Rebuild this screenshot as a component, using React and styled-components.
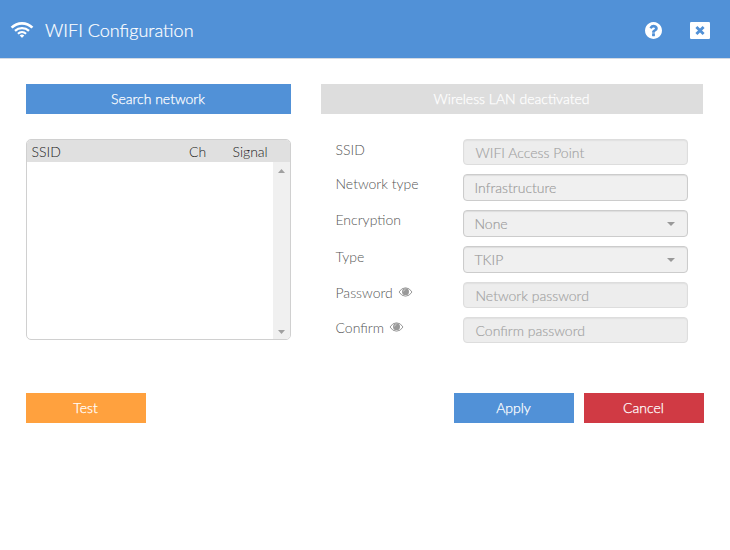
import React from "react";
import styled, { createGlobalStyle } from "styled-components";

const Global = createGlobalStyle`
  *, *::before, *::after { box-sizing: border-box; }
  body { margin: 0; background: #fff; font-family: Lato, "Liberation Sans", sans-serif; font-weight: 300; font-size: 14px; color: #555; }
  button, input { font: inherit; }
`;

const Page = styled.div`
  width: 730px;
  height: 550px;
  overflow: hidden;
  background: #fff;
`;

const Header = styled.header`
  display: flex;
  align-items: center;
  height: 59px;
  padding: 2px 20px 0 10px;
  background: #5191d7;
  border-bottom: 1px solid #d3dae4;
  color: #fff;
`;

const Title = styled.h1`
  flex: 1;
  margin: 0 0 0 11px;
  font-size: 18px;
  line-height: 24px;
  font-weight: 300;
  -webkit-text-stroke: 0.2px currentColor;
`;

const IconButton = styled.button`
  display: flex;
  padding: 0;
  border: 0;
  background: none;
  color: #fff;
  margin-left: ${(p) => p.$gap || 0}px;
`;

const Icon = styled.svg`
  display: block;
  fill: currentColor;
  flex: none;
`;

const Main = styled.main`
  display: grid;
  grid-template-columns: 265px 382px;
  column-gap: 30px;
  padding: 25px 26px 0;
`;

const tones = { blue: "#5191d7", orange: "#ffa13e", red: "#d03a44", grey: "#ddd" };

const Button = styled.button`
  display: block;
  width: ${(p) => p.$width || "100%"};
  height: 30px;
  padding: 0 1px 0 0;
  border: 0;
  background: ${(p) => tones[p.$tone]};
  color: #fff;
  font-size: 14px;
  font-weight: 300;
  -webkit-text-stroke: 0.25px currentColor;
  line-height: 30px;
  text-align: center;
`;

const NetworkList = styled.section`
  height: 201px;
  margin-top: 25px;
  border: 1px solid #d0d0d0;
  border-radius: 5px;
  overflow: hidden;
`;

const ListHead = styled.div`
  display: grid;
  grid-template-columns: 157.5px 43.5px 1fr;
  height: 22px;
  padding: 0 4.5px;
  background: #e0e0e0;
  color: #222;
  line-height: 23px;
`;

const ListBody = styled.div`
  display: flex;
  justify-content: flex-end;
  height: 177px;
`;

const Scrollbar = styled.div`
  display: flex;
  flex-direction: column;
  align-items: center;
  justify-content: space-between;
  width: 17px;
  padding: 7px 0 5px;
  background: #f0f0f0;
  color: #a0a0a0;
`;

const Form = styled.form`
  margin-top: 25px;
  padding: 0 15px;
`;

const Row = styled.div`
  display: grid;
  grid-template-columns: 127px 225px;
  height: ${(p) => p.$height}px;
`;

const Label = styled.label`
  display: flex;
  align-items: center;
  gap: 5px;
  height: ${(p) => (p.$raised ? 19 : 20)}px;
  margin-left: -0.5px;
  color: #555;
`;

const Field = styled.div`
  display: flex;
  align-items: center;
  justify-content: space-between;
  height: ${(p) => (p.$select ? 27 : 26)}px;
  padding: 1px 12px 0 ${(p) => (p.$select ? 10.5 : 11.5)}px;
  border: 1px solid ${(p) => (p.$select ? "#ccc" : "#ddd")};
  border-radius: 4px;
  background: ${(p) => (p.$select ? "#f0f0f0" : "#ededed")};
  box-shadow: inset 0 1px 1px ${(p) => (p.$select ? "#ddd" : "#e0e0e0")};
  color: ${(p) => (p.$select ? "#999" : "#a2a2a2")};
  font-weight: 300;
  -webkit-text-stroke: 0.15px currentColor;
  line-height: 20px;
`;

const Footer = styled.footer`
  display: flex;
  gap: 10px;
  padding: 53px 26px 0;
`;

const Spacer = styled.div`
  flex: 1;
`;

const Wifi = () => (
  <Icon width="24" height="18" viewBox="0 0 24 18">
    <g fill="none" stroke="currentColor">
      <path d="M1.600 6.600A14.700 14.700 0 0 1 22.400 6.600" strokeWidth="2.700" />
      <path d="M5 9.900A10.200 10.200 0 0 1 19 9.900" strokeWidth="2.300" />
      <path d="M7.900 12.700A6.100 6.100 0 0 1 16.100 12.700" strokeWidth="2" />
    </g>
    <path d="M9.700 14.500Q12 12.700 14.300 14.500L12.400 16.500Q12 16.800 11.600 16.500Z" />
  </Icon>
);

const Help = () => (
  <Icon width="17" height="17" viewBox="128 128 1536 1536">
    <path d="M1024 1376v-192q0-14-9-23t-23-9h-192q-14 0-23 9t-9 23v192q0 14 9 23t23 9h192q14 0 23-9t9-23zm256-672q0-88-55.5-163t-138.5-116-170-41q-243 0-371 213-15 24 8 42l132 100q7 6 19 6 16 0 25-12 53-68 86-92 34-24 86-24 48 0 85.5 26t37.5 59q0 38-20 61t-68 45q-63 28-115.5 86.5t-52.5 125.5v36q0 14 9 23t23 9h192q14 0 23-9t9-23q0-19 21.5-49.5t54.5-49.5q32-18 49-28.5t46-35 44.5-48 28-60.5 12.5-81zm384 192q0 209-103 385.5t-279.5 279.5-385.5 103-385.5-103-279.5-279.5-103-385.5 103-385.5 279.5-279.5 385.5-103 385.5 103 279.5 279.5 103 385.5z" />
  </Icon>
);

const Close = () => (
  <Icon width="20" height="17" viewBox="0 0 20 17">
    <rect width="20" height="17" rx="1.2" />
    <path d="M6.4 4.900 13.6 12.100M13.6 4.900 6.4 12.100" stroke="#5191d7" strokeWidth="2.8" />
  </Icon>
);

const Eye = () => (
  <Icon width="15" height="10" viewBox="0 0 15 10" color="#999">
    <path d="M1 5Q3.500 .8 7.500 .8T14 5Q11.500 9.200 7.500 9.200T1 5Z" fill="none" stroke="currentColor" />
    <circle cx="7.500" cy="4.700" r="3.500" />
    <path d="M5.500 4.500Q5.600 2.700 7.400 2.600" fill="none" stroke="#ddd" strokeWidth=".7" />
  </Icon>
);

const Caret = ({ up, width = 7, height = 4 }) => (
  <Icon width={width} height={height} viewBox="0 0 8 4" preserveAspectRatio="none">
    <path d={up ? "M0 4 4 0 8 4Z" : "M0 0H8L4 4Z"} />
  </Icon>
);

const fields = [
  { label: "SSID", value: "WIFI Access Point", height: 35 },
  { label: "Network type", value: "Infrastructure", raised: true, select: true, height: 36 },
  { label: "Encryption", value: "None", raised: true, select: true, caret: true, height: 36 },
  { label: "Type", value: "TKIP", select: true, caret: true, height: 36 },
  { label: "Password", value: "Network password", eye: true, height: 35 },
  { label: "Confirm", value: "Confirm password", eye: true, height: 23 },
];

export default function App() {
  return (
    <Page>
      <Global />
      <Header>
        <Wifi />
        <Title>WIFI Configuration</Title>
        <IconButton aria-label="Help"><Help /></IconButton>
        <IconButton aria-label="Close" $gap={28}><Close /></IconButton>
      </Header>
      <Main>
        <div>
          <Button $tone="blue">Search network</Button>
          <NetworkList>
            <ListHead>
              <span>SSID</span>
              <span>Ch</span>
              <span>Signal</span>
            </ListHead>
            <ListBody>
              <Scrollbar>
                <Caret up />
                <Caret />
              </Scrollbar>
            </ListBody>
          </NetworkList>
        </div>
        <div>
          <Button $tone="grey">Wireless LAN deactivated</Button>
          <Form>
            {fields.map((f) => (
              <Row key={f.label} $height={f.height}>
                <Label $raised={f.raised}>{f.label}{f.eye && <Eye />}</Label>
                <Field $select={f.select}>
                  {f.value}
                  {f.caret && <Caret width={8} />}
                </Field>
              </Row>
            ))}
          </Form>
        </div>
      </Main>
      <Footer>
        <Button $tone="orange" $width="120px">Test</Button>
        <Spacer />
        <Button $tone="blue" $width="120px">Apply</Button>
        <Button $tone="red" $width="120px">Cancel</Button>
      </Footer>
    </Page>
  );
}
